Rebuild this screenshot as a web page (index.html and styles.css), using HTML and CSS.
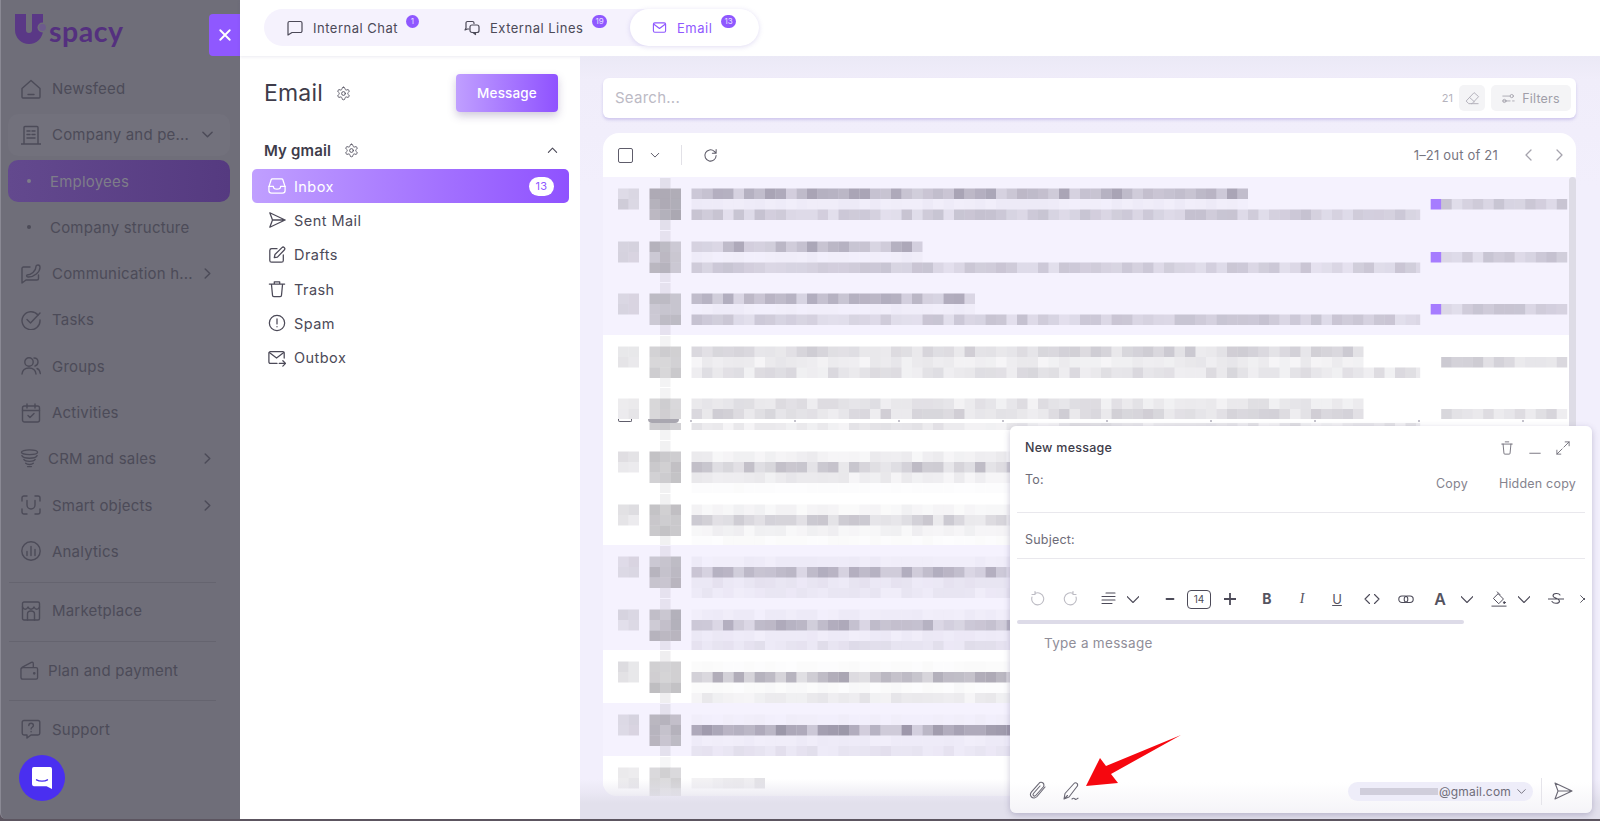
FILE: index.html
```html
<!DOCTYPE html>
<html lang="en">
<head>
<meta charset="utf-8">
<title>Email</title>
<link rel="stylesheet" href="styles.css">
</head>
<body>
<div class="app">
  <aside class="sidebar">
    <div class="logo">
      <svg class="logo-mark" viewBox="0 0 32 30" width="32" height="30"><path d="M5.500 0v16a8.500 8.500 0 0 0 17 0V0" fill="none" stroke="#5a3886" stroke-width="11" stroke-linecap="butt"/><circle cx="27.500" cy="13.500" r="5" fill="#6f6e79"/><circle cx="27.500" cy="13.500" r="3.400" fill="#6d5c8c"/></svg>
      <span class="logo-text">spacy</span>
    </div>
    <button class="close-btn" aria-label="Close"><svg viewBox="0 0 14 14" width="12" height="12"><path d="M1.500 1.500l11 11M12.500 1.500l-11 11" stroke="#fff" stroke-width="2.200" stroke-linecap="round"/></svg></button>
    <nav class="nav">
      <a class="nav-item"><svg class="ni" viewBox="0 0 20 20"><path d="M1 9.500L10 1.500l9 8V18a1 1 0 0 1-1 1H2a1 1 0 0 1-1-1z"/><path d="M7 15.500h6"/></svg><span>Newsfeed</span></a>
      <a class="nav-item nav-open"><svg class="ni" viewBox="0 0 20 20"><path d="M3 19V2.500A1 1 0 0 1 4 1.500h12a1 1 0 0 1 1 1V19M0 19h20M6 6h3M11 6h3M6 9.500h3M11 9.500h3M6 13h8"/></svg><span>Company and pe...</span><svg class="chev" viewBox="0 0 12 12"><path d="M1 3.500l5 5 5-5"/></svg></a>
      <a class="nav-item nav-sub nav-current"><i class="dot"></i><span>Employees</span></a>
      <a class="nav-item nav-sub"><i class="dot"></i><span>Company structure</span></a>
      <a class="nav-item"><svg class="ni" viewBox="0 0 20 20"><path d="M9 3H2.500A1.500 1.500 0 0 0 1 4.500V19l4-3h11a1.500 1.500 0 0 0 1.500-1.500V11"/><path d="M6 11c4 0 9-4 9-8.500 0-1 1-1.500 2-1.500s2 1 2 2.500C19 8 13 13 7.500 13 6 13 5 12 6 11z"/></svg><span>Communication h...</span><svg class="chev" viewBox="0 0 12 12"><path d="M3.500 1l5 5-5 5"/></svg></a>
      <a class="nav-item"><svg class="ni" viewBox="0 0 20 20"><path d="M17 5a9 9 0 1 0 2 5"/><path d="M6 9.500l3.500 3.500L19 3"/></svg><span>Tasks</span></a>
      <a class="nav-item"><svg class="ni" viewBox="0 0 20 20"><circle cx="8" cy="6" r="4.200"/><path d="M1 18c.5-4 3.500-6 7-6s6.500 2 7 6M13 2c2.500 0 4 1.800 4 4s-1.500 3.500-3 4M16 12.500c1.700.7 3 2.500 3.300 5"/></svg><span>Groups</span></a>
      <a class="nav-item"><svg class="ni" viewBox="0 0 20 20"><rect x="1.500" y="3" width="17" height="16" rx="2"/><path d="M1.500 7.500h17M6 1v4M14 1v4M7 12.500l2 2 4-4"/></svg><span>Activities</span></a>
      <a class="nav-item nav-tight"><svg class="ni" viewBox="0 0 20 20"><ellipse cx="10" cy="3.500" rx="8.500" ry="2.500"/><path d="M2 7c1 2 3.500 2.700 8 2.700S17 9 18 7M4 11c1 1.500 3 2 6 2s5-.5 6-2M6 15c1 1 2.500 1.300 4 1.300s3-.3 4-1.300M8 18.500h4"/></svg><span>CRM and sales</span><svg class="chev" viewBox="0 0 12 12"><path d="M3.500 1l5 5-5 5"/></svg></a>
      <a class="nav-item"><svg class="ni" viewBox="0 0 20 20"><path d="M1 6V3a2 2 0 0 1 2-2h3M14 1h3a2 2 0 0 1 2 2v3M19 14v3a2 2 0 0 1-2 2h-3M6 19H3a2 2 0 0 1-2-2v-3M6 5.500V10a4 4 0 0 0 8 0V5.500"/></svg><span>Smart objects</span><svg class="chev" viewBox="0 0 12 12"><path d="M3.500 1l5 5-5 5"/></svg></a>
      <a class="nav-item"><svg class="ni" viewBox="0 0 20 20"><circle cx="10" cy="10" r="9.200"/><path d="M6 10.500v4M10 5.500v9M14 8.500v6"/></svg><span>Analytics</span></a>
      <hr class="nav-rule">
      <a class="nav-item"><svg class="ni" viewBox="0 0 20 20"><rect x="1.500" y="1" width="17" height="18" rx="1.500"/><path d="M1.500 6c1.500 3 4 3 5.500 0 1 3 5 3 6 0 1.500 3 4 3 5.500 0M6.500 19v-6a3.500 3 0 0 1 7 0v6"/></svg><span>Marketplace</span></a>
      <hr class="nav-rule">
      <a class="nav-item nav-tight"><svg class="ni" viewBox="0 0 20 20"><path d="M1 8v9a2 2 0 0 0 2 2h14a1.500 1.500 0 0 0 1.500-1.500v-9A1.500 1.500 0 0 0 17 7H3a2 2 0 0 0-2 2c0-1 .5-2 1.500-2.500L12 1.500c1-.5 2 0 2 1.500v4"/><circle cx="15" cy="13" r=".7"/></svg><span>Plan and payment</span></a>
      <hr class="nav-rule">
      <a class="nav-item"><svg class="ni" viewBox="0 0 20 20"><path d="M3 1.500h14A1.800 1.800 0 0 1 18.800 3.300v11A1.800 1.800 0 0 1 17 16h-7l-4 3v-3H3a1.800 1.800 0 0 1-1.800-1.700v-11A1.800 1.800 0 0 1 3 1.500z"/><path d="M7.800 6.500c0-3 4.600-3 4.600 0 0 1.800-2.300 1.800-2.300 3.500M10.100 12.500v.2"/></svg><span>Support</span></a>
    </nav>
    <button class="chat-bubble" aria-label="Chat"><svg viewBox="0 0 22 24" width="20" height="22"><path d="M2 0h18a2 2 0 0 1 2 2v22l-6-3H2a2 2 0 0 1-2-2V2a2 2 0 0 1 2-2z" fill="#fff"/><path d="M5 14c3 2 9 2 12 0" stroke="#4a2ff0" stroke-width="1.500" fill="none" stroke-linecap="round"/></svg></button>
  </aside>

  <div class="content">
    <header class="topbar">
      <div class="tabs">
        <a class="tab"><svg class="ti" viewBox="0 0 16 16"><path d="M2.500 1.500h11a1.500 1.500 0 0 1 1.500 1.500v8a1.500 1.500 0 0 1-1.500 1.500H5L1 15V3a1.500 1.500 0 0 1 1.500-1.500z"/></svg><span>Internal Chat</span><b class="count">1</b></a>
        <a class="tab"><svg class="ti" viewBox="0 0 16 16"><path d="M10 3.500V3a1.500 1.500 0 0 0-1.500-1.500h-5A1.500 1.500 0 0 0 2 3v5l-1 2 2.500-1H5"/><rect x="6" y="5" width="9" height="7.500" rx="2"/><path d="M9 12.500l2.500 2v-2"/></svg><span>External Lines</span><b class="count">19</b></a>
        <a class="tab tab-active"><svg class="ti" viewBox="0 0 16 16"><rect x="1.500" y="3" width="13" height="10" rx="1.500"/><path d="M2 4.500L8 9l6-4.500"/></svg><span>Email</span><b class="count">13</b></a>
      </div>
    </header>
    <div class="workspace">
      <section class="folders">
        <div class="folders-head">
          <h1>Email</h1>
          <svg class="gear" viewBox="0 0 24 24"><path d="M12.220 2h-.44a2 2 0 0 0-2 2v.18a2 2 0 0 1-1 1.730l-.43.25a2 2 0 0 1-2 0l-.15-.08a2 2 0 0 0-2.730.73l-.22.38a2 2 0 0 0 .73 2.730l.15.1a2 2 0 0 1 1 1.720v.51a2 2 0 0 1-1 1.740l-.15.09a2 2 0 0 0-.73 2.730l.22.38a2 2 0 0 0 2.730.73l.15-.08a2 2 0 0 1 2 0l.43.25a2 2 0 0 1 1 1.730V20a2 2 0 0 0 2 2h.44a2 2 0 0 0 2-2v-.18a2 2 0 0 1 1-1.730l.43-.25a2 2 0 0 1 2 0l.15.08a2 2 0 0 0 2.730-.73l.22-.39a2 2 0 0 0-.73-2.730l-.15-.08a2 2 0 0 1-1-1.740v-.5a2 2 0 0 1 1-1.740l.15-.09a2 2 0 0 0 .73-2.730l-.22-.38a2 2 0 0 0-2.730-.73l-.15.08a2 2 0 0 1-2 0l-.43-.25a2 2 0 0 1-1-1.730V4a2 2 0 0 0-2-2z"/><circle cx="12" cy="12" r="3"/></svg>
          <button class="compose-btn">Message</button>
        </div>
        <div class="account">
          <strong>My gmail</strong>
          <svg class="gear" viewBox="0 0 24 24"><path d="M12.220 2h-.44a2 2 0 0 0-2 2v.18a2 2 0 0 1-1 1.730l-.43.25a2 2 0 0 1-2 0l-.15-.08a2 2 0 0 0-2.730.73l-.22.38a2 2 0 0 0 .73 2.730l.15.1a2 2 0 0 1 1 1.720v.51a2 2 0 0 1-1 1.740l-.15.09a2 2 0 0 0-.73 2.730l.22.38a2 2 0 0 0 2.730.73l.15-.08a2 2 0 0 1 2 0l.43.25a2 2 0 0 1 1 1.730V20a2 2 0 0 0 2 2h.44a2 2 0 0 0 2-2v-.18a2 2 0 0 1 1-1.730l.43-.25a2 2 0 0 1 2 0l.15.08a2 2 0 0 0 2.730-.73l.22-.39a2 2 0 0 0-.73-2.730l-.15-.08a2 2 0 0 1-1-1.740v-.5a2 2 0 0 1 1-1.740l.15-.09a2 2 0 0 0 .73-2.730l-.22-.38a2 2 0 0 0-2.730-.73l-.15.08a2 2 0 0 1-2 0l-.43-.25a2 2 0 0 1-1-1.730V4a2 2 0 0 0-2-2z"/><circle cx="12" cy="12" r="3"/></svg>
          <svg class="up" viewBox="0 0 12 12"><path d="M1.500 8l4.500-4.500L10.500 8"/></svg>
        </div>
        <ul class="folder-list">
          <li class="folder folder-active"><svg class="fi" viewBox="0 0 20 20"><path d="M1 11l2.500-8A1.500 1.500 0 0 1 5 2h10a1.500 1.500 0 0 1 1.500 1L19 11v4a3 3 0 0 1-3 3H4a3 3 0 0 1-3-3z"/><path d="M1 10.500h5c0 2.500 1.500 3 4 3s4-.5 4-3h5"/></svg><span>Inbox</span><b class="inbox-count">13</b></li>
          <li class="folder"><svg class="fi" viewBox="0 0 20 20"><path d="M2 2l17 8-17 8 3-8zM5 10h14"/></svg><span>Sent Mail</span></li>
          <li class="folder"><svg class="fi" viewBox="0 0 20 20"><path d="M10 3H4a2 2 0 0 0-2 2v11a2 2 0 0 0 2 2h11a2 2 0 0 0 2-2v-6"/><path d="M7 13l.7-3.500L15.500 1.800a1.800 1.800 0 0 1 2.600 2.600L10.500 12.300z"/></svg><span>Drafts</span></li>
          <li class="folder"><svg class="fi" viewBox="0 0 20 20"><path d="M1.500 4.500h17M7 4.500V2h6v2.500M3.800 4.500L5 17a1.500 1.500 0 0 0 1.500 1.500h7A1.500 1.500 0 0 0 15 17l1.200-12.500"/></svg><span>Trash</span></li>
          <li class="folder"><svg class="fi" viewBox="0 0 20 20"><circle cx="10" cy="10" r="8.500"/><path d="M10 5.500v5.500M10 14v.3"/></svg><span>Spam</span></li>
          <li class="folder"><svg class="fi" viewBox="0 0 20 20"><path d="M10 16H2.500A1.500 1.500 0 0 1 1 14.500v-10A1.500 1.500 0 0 1 2.500 3h14A1.500 1.500 0 0 1 18 4.500V10"/><path d="M1.500 4l8 6 8-6M12.500 16h7M16.500 13l3 3-3 3"/></svg><span>Outbox</span></li>
        </ul>
      </section>

      <main class="main">
        <div class="search">
          <span class="search-ph">Search...</span>
          <span class="search-count">21</span>
          <button class="tool-btn"><svg viewBox="0 0 16 16" width="15" height="15"><path d="M10 2l4.500 4-7 7.500H4L1.500 11zM5 7l5 4.500M7 13.500h7"/></svg></button>
          <button class="tool-btn filters"><svg viewBox="0 0 16 16" width="13" height="13"><path d="M1 5h9M1 11h9M13 11h2"/><circle cx="12" cy="5" r="2"/><circle cx="3" cy="11" r="2"/></svg><span>Filters</span></button>
        </div>
        <section class="list">
          <div class="list-head">
            <i class="check"></i>
            <svg class="lh-chev" viewBox="0 0 12 12"><path d="M1.500 4l4.500 4.500L10.500 4"/></svg>
            <i class="lh-sep"></i>
            <svg class="reload" viewBox="0 0 16 16"><path d="M14 8a6 6 0 1 1-2-4.500L14 5.500M14 1.500v4h-4"/></svg>
            <span class="pager">1–21 out of 21</span>
            <svg class="pg" viewBox="0 0 12 12"><path d="M8 1L3 6l5 5"/></svg>
            <svg class="pg" viewBox="0 0 12 12"><path d="M4 1l5 5-5 5"/></svg>
          </div>
          <div class="rows" id="rows"></div>
          <div class="row-strip"><i class="strip-check"></i><i class="strip-avatar"></i><i class="strip-marks"></i></div>
          <i class="scrollbar"></i>
        </section>
        <div class="bottom-fade"></div>
      </main>
    </div>
  </div>

  <section class="composer">
    <div class="composer-head">
      <span class="composer-title">New message</span>
      <svg class="ci" viewBox="0 0 16 16"><path d="M2 3.500h12M6 1h4M3.500 3.500L4.500 14a1 1 0 0 0 1 1h5a1 1 0 0 0 1-1l1-10.500"/></svg>
      <svg class="ci" viewBox="0 0 16 16"><path d="M2 14h12"/></svg>
      <svg class="ci" viewBox="0 0 16 16"><path d="M9 7l6-6M10.500 1H15v4.500M7 9l-6 6M1 10.500V15h4.500"/></svg>
    </div>
    <div class="field field-to">
      <span>To:</span>
      <a class="copy">Copy</a>
      <a class="copy">Hidden copy</a>
    </div>
    <div class="field field-subject"><span>Subject:</span></div>
    <div class="toolbar">
      <svg class="tb faint" viewBox="0 0 16 16"><path d="M3 6a6 6 0 1 0 3-3.500M6 .5v3H3"/></svg>
      <svg class="tb faint gap18" viewBox="0 0 16 16"><path d="M13 6a6 6 0 1 1-3-3.500M10 .5v3h3"/></svg>
      <svg class="tb gap22" viewBox="0 0 16 16"><path d="M5 2h9M1 5.500h13M1 9h13M1 12.500h10"/></svg>
      <svg class="tb tb-sm gap10" viewBox="0 0 12 12"><path d="M0 3.500l6 6 6-6"/></svg>
      <svg class="tb tb-sm gap25" viewBox="0 0 12 12"><path d="M2.500 6h7" stroke-width="1.800"/></svg>
      <span class="size-box">14</span>
      <svg class="tb tb-sm gap13" viewBox="0 0 12 12"><path d="M0 6h12M6 0v12" stroke-width="1.800"/></svg>
      <b class="tb-text gap24">B</b>
      <i class="tb-text tb-i gap21">I</i>
      <u class="tb-text tb-u gap21">U</u>
      <svg class="tb gap20" viewBox="0 0 16 16"><path d="M5.500 3.500L1 8l4.500 4.500M10.500 3.500L15 8l-4.500 4.500"/></svg>
      <svg class="tb gap18" viewBox="0 0 16 16"><rect x=".8" y="5" width="9" height="6.500" rx="3.200"/><rect x="6.200" y="5" width="9" height="6.500" rx="3.200"/></svg>
      <b class="tb-text tb-a gap19">A</b>
      <svg class="tb tb-sm gap14" viewBox="0 0 12 12"><path d="M0 3.500l6 6 6-6"/></svg>
      <svg class="tb gap18" viewBox="0 0 18 18"><path d="M3 8l5-5 6 6-5 5zM7 1l3 3M1 17h16"/><circle cx="15" cy="13" r="1" fill="#4c4a58"/></svg>
      <svg class="tb tb-sm gap11" viewBox="0 0 12 12"><path d="M0 3.500l6 6 6-6"/></svg>
      <svg class="tb gap18" viewBox="0 0 16 16"><path d="M0 8h16M12 4c-1-2-7-2.500-7 1 0 2 6 2 6.500 5 0 3-6 3-7.500 .5"/></svg>
      <svg class="tb tb-cut" viewBox="0 0 12 12"><path d="M2 2l8 8M10 2L2 10"/></svg>
    </div>
    <div class="toolbar-scroll"><i></i></div>
    <div class="editor">Type a message</div>
    <div class="composer-foot">
      <svg class="fo" viewBox="0 0 20 20"><path d="M17 6l-8 9.500c-1.500 1.700-4 1.800-5.500.5S2 12.500 3.500 10.800l7.500-8.500c1-1.200 2.800-1.300 4-.3s1.200 2.800.2 4l-7.500 8.500c-.6.7-1.600.8-2.200.2s-.7-1.500-.1-2.200L12 5"/></svg>
      <svg class="fo" viewBox="0 0 20 20"><path d="M2 18l1-5.500L12 2.500a2 2 0 0 1 3 0 2 2 0 0 1 0 3L7 16zM2 18l3.500-3.500M10 18c1.500-1.500 2-1 3 0s1.500 0 3-.8"/></svg>
      <div class="sender"><i class="sender-blur"></i><span>@gmail.com</span><svg viewBox="0 0 12 12" width="9" height="9"><path d="M1 3.500l5 5 5-5"/></svg></div>
      <i class="foot-sep"></i>
      <svg class="fo send" viewBox="0 0 20 20"><path d="M2 2l17 8-17 8 3-8zM5 10h14"/></svg>
    </div>
  </section>

  <svg class="arrow" viewBox="0 0 100 52" width="100" height="52"><path d="M96 0L26 39l7 9-32 3L15 23l6 8z" fill="#f6070f"/></svg>
</div>
<script src="script.js"></script>
</body>
</html>
```
FILE: styles.css
```css
* { box-sizing: border-box; }
html, body { margin: 0; height: 100%; overflow: hidden; }
body {
  font-family: Inter, "Noto Sans", sans-serif;
  color: #4c4a58;
  background: #5c5560;
}
button { font: inherit; border: 0; cursor: pointer; }
a { text-decoration: none; color: inherit; }
svg { fill: none; stroke: currentColor; stroke-linecap: round; stroke-linejoin: round; flex: none; }

.app { position: relative; display: flex; height: 819px; overflow: hidden; }

/* sidebar */
.sidebar {
  position: relative;
  width: 240px;
  flex: none;
  background: #6f6e79;
  border-left: 1px solid #8a8994;
  border-bottom-left-radius: 6px;
  padding: 14px 10px 0 7px;
  color: #4c4b58;
}
.logo { display: flex; align-items: flex-start; height: 32px; margin-left: 7px; }
.logo-mark { stroke: none; }
.logo-text {
  font-family: Lato, sans-serif;
  font-weight: 700;
  font-size: 28.500px;
  line-height: 28px;
  letter-spacing: .5px;
  color: #54307f;
  margin-left: 2px;
  position: relative;
  top: 3px;
}
.close-btn {
  position: absolute;
  top: 14px;
  right: 0;
  width: 31px;
  height: 42px;
  background: #8f58ff;
  border-radius: 4px 0 0 4px;
  display: flex;
  align-items: center;
  justify-content: center;
  padding: 0;
}
.nav { margin-top: 21.500px; display: flex; flex-direction: column; }
.nav-item {
  display: flex;
  align-items: center;
  height: 42px;
  margin-bottom: 4.300px;
  padding: 0 13px;
  font-size: 15px;
  letter-spacing: .2px;
  border-radius: 10px;
  white-space: nowrap;
}
.nav-item > span { flex: 1; margin-left: 11px; }
.ni { width: 20px; height: 20px; stroke-width: 1.400; }
.chev { width: 11px; height: 11px; stroke-width: 1.600; margin-right: 4px; }
.nav-open { background: #72717c; }
.nav-sub { padding-left: 19px; }
.nav-sub > span { margin-left: 19px; }
.nav-current { background: linear-gradient(90deg, #63498e, #553a80); color: #7e7d89; }
.dot { width: 4px; height: 4px; border-radius: 50%; background: currentColor; flex: none; }
.nav-tight > span { margin-left: 9px; }
.nav-tight .ni { width: 19px; height: 19px; margin-left: -1px; }
.nav-rule { border: 0; border-top: 1px solid #65646f; margin: 5px 14px 7px 1px; width: auto; }
.chat-bubble {
  position: absolute;
  left: 18px;
  top: 755px;
  width: 46px;
  height: 46px;
  border-radius: 50%;
  background: #4a2ff0;
  display: flex;
  align-items: center;
  justify-content: center;
  padding: 0;
}
.chat-bubble svg { stroke: none; }

/* content */
.content { flex: 1; display: flex; flex-direction: column; min-width: 0; }
.topbar {
  height: 56px;
  flex: none;
  background: #fff;
  padding: 9px 0 0 24px;
  box-shadow: 0 1px 3px rgba(90, 80, 130, .12);
  position: relative;
}
.tabs { display: inline-flex; height: 37px; background: #f5f2fd; border-radius: 19px; padding-left: 23px; }
.tab {
  display: flex;
  align-items: center;
  font-size: 13px;
  letter-spacing: .5px;
  color: #4c4a58;
  position: relative;
}
.tab:nth-child(1) { width: 177px; }
.tab:nth-child(2) { width: 166px; }
.ti { width: 16px; height: 16px; stroke-width: 1.200; margin-right: 10px; }
.count {
  position: absolute;
  top: 6px;
  width: 13px;
  height: 13px;
  border-radius: 50%;
  background: #8f58ff;
  color: #e9e0ff;
  font-size: 8px;
  font-weight: 400;
  line-height: 13px;
  text-align: center;
  letter-spacing: 0;
}
.tab:nth-child(1) .count { left: 119px; }
.tab:nth-child(2) .count { left: 128px; width: 15px; border-radius: 8px; }
.tab-active {
  background: #fff;
  height: 37px;
  width: 129px;
  border-radius: 19px;
  padding-left: 22px;
  color: #8f58ff;
  box-shadow: 0 1px 5px rgba(120, 100, 200, .22);
}
.tab-active .ti { margin-right: 10px; width: 15px; height: 15px; }
.tab-active .count { left: 91px; width: 15px; border-radius: 8px; }

.workspace { flex: 1; display: flex; min-height: 0; }
.folders { width: 340px; flex: none; background: #fff; padding: 18px 11px 0 12px; }
.folders-head { display: flex; align-items: center; height: 38px; padding-left: 12px; }
.folders-head h1 { margin: 0; font-size: 23px; font-weight: 400; letter-spacing: .2px; color: #3e3c4a; }
.gear { width: 15px; height: 15px; stroke-width: 1.600; color: #5a5866; margin-left: 13px; }
.compose-btn {
  margin-left: auto;
  margin-right: 11px;
  width: 102px;
  height: 38px;
  border-radius: 4px;
  color: #fff;
  font-size: 13.500px;
  font-weight: 500;
  letter-spacing: .15px;
  background: linear-gradient(90deg, #c09fff, #8f52ff);
  box-shadow: 0 4px 8px rgba(90, 70, 130, .28);
}
.account { display: flex; align-items: center; height: 24px; margin-top: 26px; padding-left: 12px; }
.account strong { font-size: 15px; font-weight: 600; letter-spacing: .15px; color: #3e3c4a; }
.up { width: 11px; height: 11px; margin-left: auto; margin-right: 11px; stroke-width: 1.200; }
.folder-list { list-style: none; margin: 7px 0 0; padding: 0; }
.folder {
  display: flex;
  align-items: center;
  height: 34.300px;
  padding: 0 15px 0 16px;
  font-size: 14.500px;
  letter-spacing: .45px;
  border-radius: 5px;
  color: #4c4a58;
}
.folder > span { flex: 1; margin-left: 8px; }
.fi { width: 18px; height: 18px; stroke-width: 1.400; }
.folder-active { background: linear-gradient(90deg, #c09fff, #8f52ff); color: #fff; }
.inbox-count {
  width: 25px;
  height: 19px;
  border-radius: 10px;
  background: #fff;
  color: #8f58ff;
  font-size: 11px;
  font-weight: 400;
  line-height: 19px;
  text-align: center;
}

/* main */
.main {
  position: relative;
  flex: 1;
  min-width: 0;
  background: linear-gradient(180deg, #ebe9f6, #f0edfa 24px, #f2effc 130px);
  padding: 22px 24px 23px 23px;
  display: flex;
  flex-direction: column;
}
.search {
  height: 40px;
  flex: none;
  background: #fff;
  border-radius: 6px;
  box-shadow: 0 2px 3px rgba(110, 90, 200, .25);
  display: flex;
  align-items: center;
  padding: 0 5px 0 12px;
}
.search-ph { flex: 1; font-size: 15px; letter-spacing: .25px; color: #bcbac5; position: relative; top: -1px; }
.search-count { font-size: 11px; color: #b5b3bd; margin-right: 6px; }
.tool-btn {
  width: 26px;
  height: 26px;
  border-radius: 5px;
  background: #f4f4f6;
  color: #b0aeb9;
  display: flex;
  align-items: center;
  justify-content: center;
  padding: 0;
}
.filters { width: 80px; margin-left: 6px; font-size: 12.500px; letter-spacing: .2px; color: #a09ea9; gap: 7px; }
.list {
  position: relative;
  flex: 1;
  margin-top: 15px;
  min-height: 0;
  background: #fff;
  border-radius: 16px 16px 0 14px;
  display: flex;
  flex-direction: column;
  overflow: hidden;
}
.list-head {
  height: 44px;
  flex: none;
  display: flex;
  align-items: center;
  padding: 0 11px 0 15px;
  color: #5e5c69;
}
.check { width: 15px; height: 15px; border: 1.500px solid #5e5c6a; border-radius: 2px; flex: none; }
.lh-chev { width: 10px; height: 10px; stroke-width: 1.200; margin-left: 17px; }
.lh-sep { width: 1px; height: 20px; background: #e2e1e7; margin-left: 21px; }
.reload { width: 15px; height: 15px; stroke-width: 1.100; margin-left: 21px; }
.pager { margin-left: auto; margin-right: 6px; font-size: 13px; letter-spacing: .2px; color: #77757f; }
.pg { width: 12px; height: 12px; stroke-width: 1.300; color: #a5a3ad; margin-left: 19px; }
.pg:last-child { margin-left: 18px; }
.rows { flex: 1; min-height: 0; overflow: hidden; }
.mail-row { display: block; width: 100%; height: 52.600px; stroke: none; }
.mail-row rect { stroke: none; }
.row-unread { background: #f5f2fe; }
.row-read { background: #fff; }
.scrollbar { position: absolute; right: 0; top: 44px; bottom: 0; width: 7px; border-radius: 4px 4px 0 0; background: #dedce6; }
.row-strip {
  position: absolute;
  left: 15px;
  right: 8px;
  top: 286px;
  height: 4px;
  background: #fff;
}
.strip-check { position: absolute; left: 0; top: 0; width: 14px; height: 3px; border: 1.500px solid #5e5c6a; border-top: 0; border-radius: 0 0 2px 2px; }
.strip-avatar { position: absolute; left: 30px; top: 0; width: 31px; height: 4px; background: #a9a7b0; border-radius: 0 0 12px 12px; }
.strip-marks {
  position: absolute;
  left: 72px;
  right: 0;
  top: 1px;
  height: 2px;
  background: repeating-linear-gradient(90deg, #c4c2cc 0 2px, transparent 2px 104px);
}
.bottom-fade {
  position: absolute;
  left: 0;
  right: 0;
  bottom: 0;
  height: 40px;
  background: linear-gradient(180deg, rgba(226, 224, 236, 0), rgba(226, 224, 236, .5) 35%, #e2e0ec 60%);
  pointer-events: none;
}

/* composer */
.composer {
  position: absolute;
  left: 1010px;
  top: 426px;
  width: 582px;
  height: 387px;
  background: linear-gradient(180deg, #fff 92%, #f5f4f8);
  border-radius: 6px;
  box-shadow: 0 2px 6px rgba(70, 60, 110, .28);
  display: flex;
  flex-direction: column;
  padding: 0 7px;
  overflow: hidden;
}
.composer-head { display: flex; align-items: center; height: 43px; flex: none; padding: 0 15px 0 8px; }
.composer-title { flex: 1; font-size: 12.500px; font-weight: 500; letter-spacing: .25px; color: #3e3c4a; }
.ci { width: 14px; height: 14px; stroke-width: 1; color: #6a6874; margin-left: 14px; }
.field { flex: none; font-size: 12.500px; letter-spacing: .2px; color: #6e6c78; border-bottom: 1px solid #e9e8ed; padding-left: 8px; }
.field-to { height: 44px; display: flex; align-items: flex-start; gap: 22px; padding-top: 1px; }
.field-to > span { flex: 1; line-height: 20px; }
.copy { color: #85838e; line-height: 26px; padding-top: 1px; margin-right: 9px; }
.field-subject { height: 46px; padding-top: 17px; line-height: 20px; }
.toolbar { display: flex; align-items: center; height: 36px; margin-top: 22px; padding-left: 12px; flex: none; color: #4c4a58; overflow: hidden; }
.tb { width: 16px; height: 16px; stroke-width: 1.100; }
.tb-sm { width: 12px; height: 12px; }
.faint { color: #bdbcc4; }
.tb-text { font-size: 14px; line-height: 16px; font-style: normal; width: 14px; text-align: center; flex: none; color: #55535f; }
.tb-i { font-family: "Liberation Serif", serif; font-style: italic; }
.tb-u { font-size: 13px; }
.tb-a { font-size: 16px; font-weight: 600; }
.tb-cut { margin-left: 15px; width: 10px; }
.gap10 { margin-left: 10px; }
.gap11 { margin-left: 11px; }
.gap13 { margin-left: 13px; }
.gap14 { margin-left: 14px; }
.gap18 { margin-left: 18px; }
.gap19 { margin-left: 19px; }
.gap20 { margin-left: 20px; }
.gap21 { margin-left: 21px; }
.gap22 { margin-left: 22px; }
.gap24 { margin-left: 24px; }
.gap25 { margin-left: 25px; }
.size-box {
  width: 24px;
  height: 19px;
  margin-left: 11px;
  border: 1.500px solid #4c4a58;
  border-radius: 4px;
  font-size: 10px;
  line-height: 16px;
  text-align: center;
  flex: none;
}
.toolbar-scroll { height: 4px; margin-top: 3px; flex: none; }
.toolbar-scroll i { display: block; width: 447px; height: 4px; border-radius: 2px; background: #dddbe8; }
.editor { flex: 1; padding: 11px 0 0 27px; font-size: 13.500px; letter-spacing: .3px; color: #908e99; }
.composer-foot { height: 44px; flex: none; display: flex; align-items: center; padding: 0 12px 0 11px; color: #6a6874; }
.fo { width: 20px; height: 20px; stroke-width: 1.100; margin-right: 14px; }
.sender {
  margin-left: auto;
  width: 185px;
  height: 19px;
  border-radius: 10px;
  background: #eeedf9;
  display: flex;
  align-items: center;
  padding: 0 7px 0 11px;
  font-size: 12px;
  letter-spacing: .2px;
  color: #6e6c78;
}
.sender-blur { width: 78px; height: 7px; background: #d0cedb; margin-right: 1px; margin-left: 1px; }
.sender svg { margin-left: auto; stroke-width: 1.200; }
.foot-sep { width: 1px; height: 27px; background: #e5e4ea; margin-left: 8px; }
.send { margin: 0 0 0 11px; }
.arrow { position: absolute; left: 1085px; top: 735px; stroke: none; }
.arrow path { stroke: none; }
```
FILE: script.js
```js
(function () {
  var CELL = 10.5, START = 15;
  var seed = 7;
  function rnd() { seed = (seed * 16807) % 2147483647; return seed / 2147483647; }

  // u: unread row; l: opacity of the five mosaic lines; end: last column of each line
  var rows = [
    { u: 1, a: .9, l: [0, .5, .05, .3, .02], first: 1, end: [0, 60, 60, 76.4, 0], date: .3 },
    { u: 1, a: .7, l: [0, .46, .04, .28, .02], first: 1, end: [0, 29, 29, 76.4, 0], date: .28 },
    { u: 1, a: .7, l: [0, .44, .04, .3, .02], first: 1, end: [0, 34, 34, 76.4, 0], date: .28 },
    { u: 0, a: .5, l: [0, .3, .14, .22, .02], end: [0, 71, 71, 76.4, 0], date: .28 },
    { u: 0, a: .5, l: [0, .2, .28, .18, .02], end: [0, 71, 71, 76.4, 0], date: .22 },
    { u: 0, a: .6, l: [0, .12, .38, .14, .02], end: [0, 66, 66, 66, 66], date: .2 },
    { u: 0, a: .6, l: [0, .08, .32, .1, .03], end: [0, 66, 66, 66, 66], date: .2 },
    { u: 1, a: .7, l: [0, .05, .42, .1, .08], end: [0, 66, 66, 66, 66], date: .2 },
    { u: 1, a: .7, l: [0, .05, .46, .06, .14], end: [0, 66, 66, 66, 66], date: .2 },
    { u: 0, a: .7, l: [0, .03, .5, .04, .16], end: [0, 66, 66, 66, 66], date: .2 },
    { u: 1, a: .8, l: [0, .03, .56, .05, .12], end: [0, 66, 66, 66, 66], date: .2 },
    { u: 0, a: .4, l: [0, 0, .18, 0, 0], end: [0, 0, 14, 0, 0], date: 0 }
  ];

  var out = '';
  rows.forEach(function (r) {
    var s = '<svg class="mail-row ' + (r.u ? 'row-unread' : 'row-read') + '" viewBox="0 0 973 52.6" preserveAspectRatio="none">';
    function cell(c, y, col, op, w) {
      s += '<rect x="' + (START + c * CELL).toFixed(1) + '" y="' + (y * CELL + 1) + '" width="' + (w || CELL) + '" height="10.5" fill="' + col + '" opacity="' + op.toFixed(2) + '"/>';
    }
    // avatar, two by two
    for (var i = 0; i < 2; i++) for (var j = 1; j < 3; j++) cell(i, j, '#8e8a98', (.18 + rnd() * .14) * (r.a + .3));
    // sender: cross of three columns
    for (var c = 3; c < 6; c++) for (var y = 1; y < 4; y++) cell(c, y, '#77747c', (.3 + rnd() * .3) * r.a + .1);
    cell(4, 0, '#8e8a98', .2 * r.a);
    cell(4, 4, '#8e8a98', .2 * r.a);
    // text lines
    r.l.forEach(function (op, ly) {
      if (!op) return;
      var end = r.end[ly], col;
      for (col = 7; col + 1 <= end; col++) cell(col, ly, '#7a7488', op * (.45 + rnd() * .85));
      if (end > col) cell(col, ly, '#7a7488', op * .7, (end - col) * CELL);
    });
    // date
    if (r.date) {
      for (var d = r.first ? 77.4 : 78.4; d < 90.3; d++) {
        if (r.first && d === 77.4) cell(d, 2, '#a67cff', 1);
        else cell(d, 2, '#7a7488', r.date * (.55 + rnd() * .9));
      }
    }
    s += '</svg>';
    out += s;
  });
  document.getElementById('rows').innerHTML = out;
})();
```
